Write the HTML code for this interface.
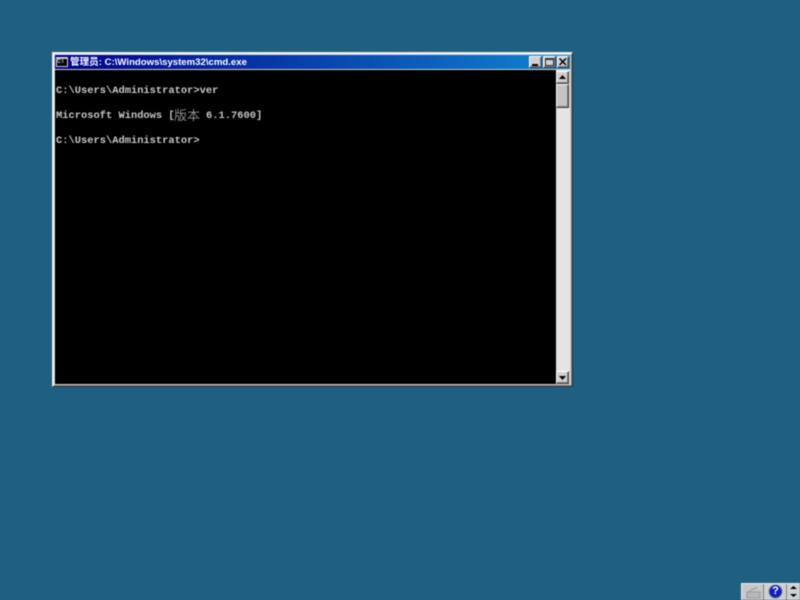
<!DOCTYPE html>
<html><head><meta charset="utf-8"><style>
html,body{margin:0;padding:0;width:800px;height:600px;overflow:hidden;background:#1f5f7f}
#w{position:absolute;left:0;top:0;width:800px;height:600px;filter:blur(.4px);background:#1f5f7f}
div,span{position:absolute;box-sizing:border-box}
.t{font:bold 10.4px/12.5px "Liberation Mono","Noto Sans CJK SC",monospace;color:#c8c8c8;white-space:pre;letter-spacing:.01px}
.btn{background:#d0d0d0;border:1px solid;border-color:#fff #404040 #404040 #fff;box-shadow:inset -1px -1px 0 #808080}
</style></head><body><div id="w">
<div style="left:52px;top:52px;width:521px;height:335px;background:#d0d0d0;border:1px solid;border-color:#e0e0e0 #303030 #303030 #e0e0e0;box-shadow:inset 1px 1px 0 #fff,inset -1px -1px 0 #808080"></div>
<div style="left:55px;top:55px;width:515px;height:14px;background:linear-gradient(90deg,#00008a,#1084d0)"></div>
<div style="left:56px;top:57px;width:12px;height:10px;background:#000;border:1px solid #d0d0d0;border-top-width:2px"></div>
<div style="left:57px;top:59px;font:bold 5px/7px 'Liberation Sans',sans-serif;color:#ddd;white-space:pre">C:\</div>
<div style="left:70px;top:55px;height:14px;font:bold 9.6px/15px 'Liberation Sans','Noto Sans CJK SC',sans-serif;color:#fff;white-space:pre">管理员: C:\Windows\system32\cmd.exe</div>

<div class="btn" style="left:529px;top:56px;width:13px;height:12px"></div>
<div style="left:532px;top:64px;width:6px;height:2px;background:#000"></div>
<div class="btn" style="left:543px;top:56px;width:13px;height:12px"></div>
<div style="left:545px;top:58px;width:9px;height:8px;border:1px solid #333;border-top-width:2px"></div>
<div class="btn" style="left:557px;top:56px;width:12px;height:12px"></div>
<svg style="position:absolute;left:559px;top:58px" width="8" height="8"><path d="M0.5 .5L7 7M7 .5L0.5 7" stroke="#000" stroke-width="1.5"/></svg>

<div style="left:55px;top:70px;width:501px;height:314px;background:#000"></div>
<div class="t" style="left:56px;top:85px">C:\Users\Administrator&gt;ver</div>
<div class="t" style="left:56px;top:110px">Microsoft Windows [</div>
<div style="left:174px;top:107px;font:13px/16px 'Noto Sans CJK SC','WenQuanYi Zen Hei',sans-serif;color:#c0c0c0;white-space:pre;font-weight:300">版本</div>
<div class="t" style="left:206px;top:110px">6.1.7600]</div>
<div class="t" style="left:56px;top:135px">C:\Users\Administrator&gt;</div>

<div style="left:556px;top:70px;width:14px;height:314px;background:#e4e4e4"></div>
<div class="btn" style="left:556px;top:71px;width:13px;height:13px"></div>
<svg style="position:absolute;left:559px;top:75px" width="7" height="4"><path d="M3.5 0L7 4H0Z" fill="#000"/></svg>
<div class="btn" style="left:556px;top:84px;width:13px;height:24px;background:#c4c4c4"></div>
<div class="btn" style="left:556px;top:371px;width:13px;height:13px"></div>
<svg style="position:absolute;left:559px;top:376px" width="7" height="4"><path d="M0 0H7L3.5 4Z" fill="#000"/></svg>

<div style="left:741px;top:583px;width:59px;height:17px;background:#d0d0d0;border-top:1px solid #eee;border-left:1px solid #eee"></div>
<div style="left:742px;top:584px;width:22px;height:16px;background:#c8c8c8;border-right:1px solid #808080"></div>
<svg style="position:absolute;left:746px;top:584px" width="16" height="15"><path d="M1 8H14V14H1ZM3 8L6 5H9L11 3" fill="#b8b8b8" stroke="#a0a0a0" stroke-width="1.2"/></svg>
<svg style="position:absolute;left:768px;top:584px" width="15" height="15"><circle cx="7.5" cy="7.5" r="6.5" fill="#1020b0" stroke="#7080b0"/></svg>
<div style="left:768px;top:584px;width:15px;height:15px;font:bold 11px/15px 'Liberation Sans',sans-serif;color:#fff;text-align:center">?</div>
<div style="left:786px;top:584px;width:1px;height:16px;background:#808080"></div>
<svg style="position:absolute;left:790px;top:586px" width="7" height="12"><path d="M3.5 0L7 3H0ZM0 8H7L3.5 11Z" fill="#000"/></svg>
</div></body></html>
